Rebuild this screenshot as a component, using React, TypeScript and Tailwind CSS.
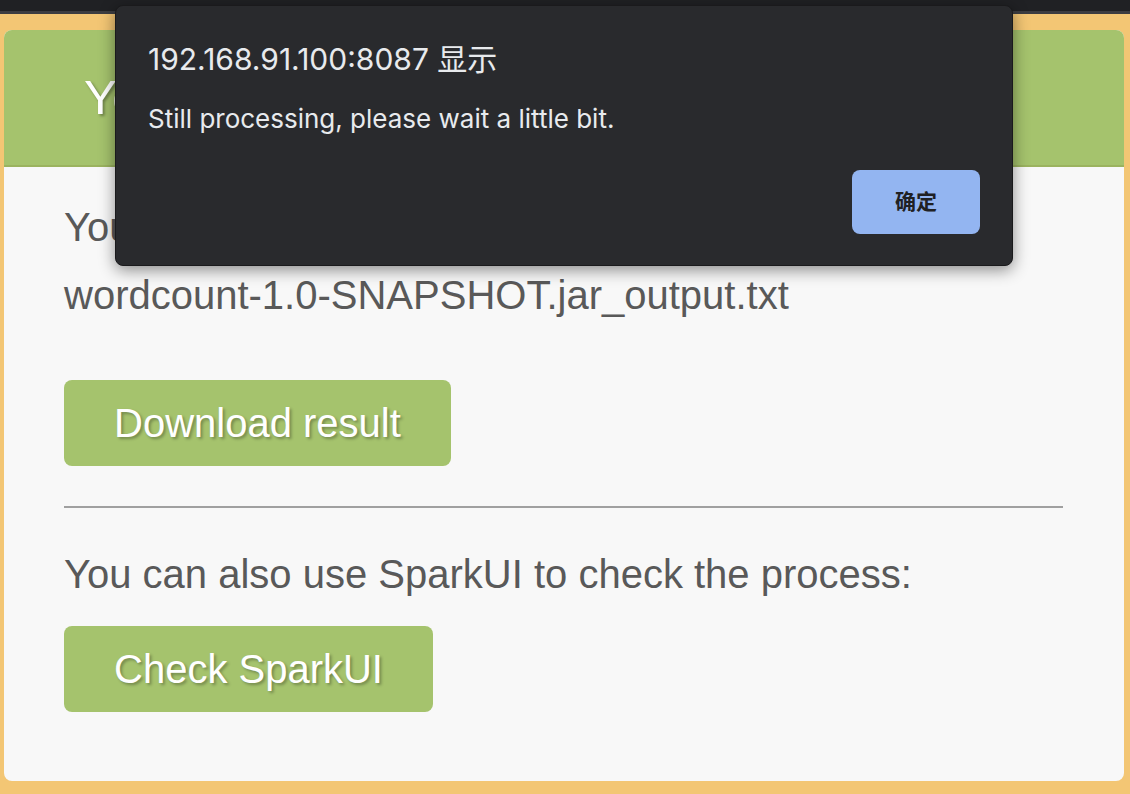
import React from 'react';

const App: React.FC = () => {
  const page = { fontFamily: '"Liberation Sans", Arial, sans-serif' };
  const dialogFont = { fontFamily: 'Inter, "Noto Sans CJK SC", sans-serif' };

  return (
    <div className="relative w-[1130px] h-[794px] overflow-hidden bg-[#f3c674]" style={page}>
      {/* browser chrome strip */}
      <div className="h-[11px] bg-[#202124]" />
      <div className="h-[3px] bg-[#3c3d41]" />

      {/* result card */}
      <div className="mx-[4px] mt-[16px] mr-[6px] rounded-[8px] bg-[#f8f8f8] overflow-hidden">
        <div className="h-[137px] bg-[#a5c36d] border-b-2 border-[#9bb35f] flex items-center px-[80px]">
          <h1 className="text-[49px] text-white [text-shadow:2px_2px_3px_rgba(0,0,0,0.35)]">
            Your job is running
          </h1>
        </div>
        <div className="px-[60px] pt-[26px] pb-[69px] text-[#595959]">
          <p className="text-[40px] leading-[68px]">
            Your result will be saved as:
            <br />
            wordcount-1.0-SNAPSHOT.jar_output.txt
          </p>
          <button className="mt-[51px] h-[86px] px-[50px] rounded-[8px] bg-[#a5c36d] text-white text-[40px] leading-[40px] [text-shadow:2px_2px_3px_rgba(0,0,0,0.3)]">
            Download result
          </button>
          <hr className="mt-[40px] mr-[1px] border-t-2 border-[#a0a0a0]" />
          <p className="mt-[46px] text-[40px] leading-[40px]">You can also use SparkUI to check the process:</p>
          <button className="mt-[32px] h-[86px] px-[50px] rounded-[8px] bg-[#a5c36d] text-white text-[40px] leading-[40px] [text-shadow:2px_2px_3px_rgba(0,0,0,0.3)]">
            Check SparkUI
          </button>
        </div>
      </div>

      {/* alert dialog */}
      <div
        className="absolute left-[115px] top-[5px] w-[898px] h-[261px] rounded-[8px] bg-[#292a2d] border border-[#1a1a1c] shadow-[0_4px_16px_rgba(0,0,0,0.45)] px-[32px] pt-[35px] flex flex-col"
        style={dialogFont}
      >
        <div className="text-[30px] leading-[36px] text-[#e8eaed]">192.168.91.100:8087 显示</div>
        <div className="mt-[27px] text-[26px] leading-[30px] text-[#e8eaed]">Still processing, please wait a little bit.</div>
        <div className="mt-auto mb-[31px] flex justify-end">
          <button className="w-[128px] h-[64px] rounded-[8px] bg-[#93b5f1] text-[#202124] text-[21px] font-bold">
            确定
          </button>
        </div>
      </div>
    </div>
  );
};

export default App;
